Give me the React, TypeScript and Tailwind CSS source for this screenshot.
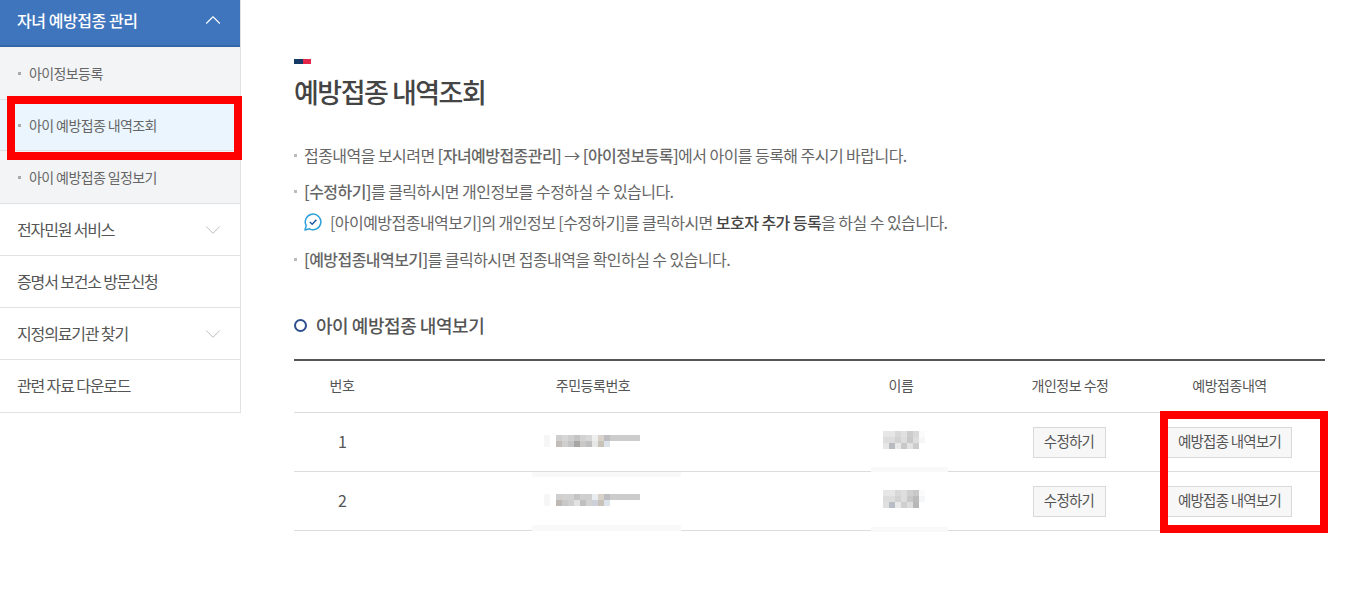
import { ChevronDown, ChevronUp } from "lucide-react"

const FONT = "font-['Noto_Sans_CJK_KR','Noto_Sans',sans-serif]"

function SubItem({ label, active }: { label: string; active?: boolean }) {
  return (
    <li className={`flex h-[52px] items-center gap-[8px] pl-[18px] text-[14px] tracking-[-0.6px] text-[#666] ${active ? "border-y border-[#e0e0e0] bg-[#eaf5fe]" : ""}`}>
      <span className="h-[3px] w-[3px] bg-[#aaa]" />
      {label}
    </li>
  )
}

function MenuItem({ label, arrow, tall }: { label: string; arrow?: boolean; tall?: boolean }) {
  return (
    <li className={`flex items-center justify-between border-b border-[#e2e2e2] pl-[17px] pr-[14px] text-[16px] tracking-[-1.15px] text-[#555] ${tall ? "h-[53px]" : "h-[52px]"}`}>
      <span className="pb-[2px]">{label}</span>
      {arrow && <ChevronDown className="h-[26px] w-[26px] text-[#bbb]" strokeWidth={0.9} />}
    </li>
  )
}

function Bullet({ children }: { children: React.ReactNode }) {
  return (
    <li className="flex items-center gap-[7px] text-[16px] tracking-[-0.55px] text-[#666]">
      <span className="h-[3px] w-[3px] bg-[#bbb]" />
      <span>{children}</span>
    </li>
  )
}

function Mosaic({ rows, size = 6 }: { rows: string[][]; size?: number }) {
  return (
    <div className="flex flex-col">
      {rows.map((row, i) => (
        <div key={i} className="flex">
          {row.map((c, j) => (
            <span key={j} style={{ backgroundColor: c, width: size, height: size }} />
          ))}
        </div>
      ))}
    </div>
  )
}

const idRows1 = [
  ["#f6f6f6", "#ffffff", "#cfcfcf", "#d6d6d6", "#cfcfcf", "#c4c4c4", "#d2d2d2", "#d8d8d8", "#eeeeee", "#d8d2ca", "#bdbdc2", "#cccccc", "#cccccc", "#cccccc", "#cccccc", "#cccccc"],
  ["#f6f6f6", "#ffffff", "#c2bdb8", "#cfcfcf", "#c4c4c4", "#a8a5a5", "#c8c8c8", "#bfbfbf", "#e6e6e6", "#c8c2b8", "#dde3ea"],
]
const idRows2 = [
  ["#f6f6f6", "#ffffff", "#cfcfcf", "#d2d2d2", "#d2d2d2", "#c4c4c4", "#cfcfcf", "#cfcfcf", "#e8ebf0", "#d8d2ca", "#bdbdc2", "#cccccc", "#cccccc", "#cccccc", "#cccccc", "#cccccc"],
  ["#f6f6f6", "#ffffff", "#bdb8b4", "#c8c8c8", "#cfcfcf", "#e2e2e2", "#bfbfbf", "#d2d2d2", "#ccd0d8", "#c8c2b8", "#dde3ea"],
]
const nameRows1 = [
  ["#e6e6e6", "#e6e6e6", "#d8d8d8", "#e0e0e0", "#cccccc", "#d8d8d8", "#fbfbfb"],
  ["#dddddd", "#dddddd", "#d2d2d2", "#dddddd", "#c8c8c8", "#dddddd", "#f4f6f8"],
  ["#e6e6e6", "#b8bcc0", "#e8e8e8", "#c8c8c8", "#e2e2e2", "#cccccc", "#ffffff"],
]
const nameRows2 = [
  ["#e6e6e6", "#e6e6e6", "#d8d8d8", "#dedede", "#cfcfcf", "#c8c8c8", "#fbfbfb"],
  ["#dddddd", "#dddddd", "#d2d2d2", "#dddddd", "#c8c8c8", "#bbbbbb", "#f4f6f8"],
  ["#e0e0e0", "#b8bcc4", "#e8e8e8", "#cfcfcf", "#dddddd", "#b8b8b8", "#ffffff"],
]

function PageButton({ label, wide }: { label: string; wide?: boolean }) {
  return (
    <button className={`flex h-[31px] items-center justify-center border border-[#d8d8d8] bg-[#f7f7f8] pb-[2px] text-[14.5px] tracking-[-0.75px] text-[#555] ${wide ? "w-[125px]" : "w-[73px]"}`}>
      {label}
    </button>
  )
}

function Row({ no, id, name, first }: { no: number; id: string[][]; name: string[][]; first?: boolean }) {
  return (
    <div className="grid h-[59px] grid-cols-[96px_406px_210px_128px_191px] items-center border-b border-[#dcdcdc] text-[#555]">
      <div className="pb-[2px] pl-[1px] text-center text-[16px]">{no}</div>
      <div className="relative h-full">
        <div className="absolute left-[154px] top-[22px]"><Mosaic rows={id} /></div>
        <div className={`absolute left-[142px] w-[149px] bg-[#f9f9f9] ${first ? "bottom-[-6px] h-[5px]" : "bottom-[-1px] h-[6px]"}`} />
      </div>
      <div className="relative h-full">
        <div className="absolute left-[87px] top-[18px]"><Mosaic rows={name} /></div>
        <div className={`absolute left-[75px] h-[5px] w-[77px] bg-[#f9f9f9] ${first ? "bottom-[-1px]" : "bottom-[-2px]"}`} />
      </div>
      <div className="flex justify-center pr-[2px]"><PageButton label="수정하기" /></div>
      <div className="flex justify-center"><PageButton label="예방접종 내역보기" wide /></div>
    </div>
  )
}

export default function App() {
  return (
    <div className={`relative flex h-[613px] w-[1372px] overflow-hidden bg-white ${FONT}`}>
      {/* Sidebar */}
      <aside className="w-[241px] shrink-0">
        <div className="border-r border-[#e2e2e2]">
          <div className="flex h-[47px] items-center justify-between border-b-2 border-[#3566a8] bg-[#3f75bd] pb-[5px] pl-[17px] pr-[14px] text-[16px] font-medium tracking-[-0.45px] text-white">
            자녀 예방접종 관리
            <ChevronUp className="h-[26px] w-[26px] text-white" strokeWidth={1} />
          </div>
          <ul className="border-b border-[#e2e2e2] bg-[#f3f4f6]">
            <SubItem label="아이정보등록" />
            <SubItem label="아이 예방접종 내역조회" active />
            <SubItem label="아이 예방접종 일정보기" />
          </ul>
          <ul>
            <MenuItem label="전자민원 서비스" arrow />
            <MenuItem label="증명서 보건소 방문신청" />
            <MenuItem label="지정의료기관 찾기" arrow />
            <MenuItem label="관련 자료 다운로드" tall />
          </ul>
        </div>
      </aside>

      {/* Content */}
      <main className="ml-[53px] w-[1031px] pt-[59px]">
        <div className="flex h-[5px] w-[17px]">
          <span className="w-[9px] bg-[#143a66]" />
          <span className="w-[8px] bg-[#e5284a]" />
        </div>
        <h1 className="mt-[10px] text-[27px] font-medium leading-[36px] tracking-[-1.5px] text-[#444]">예방접종 내역조회</h1>

        <ul className="mt-[34px] flex flex-col">
          <div className="h-[22px] leading-[22px]">
            <Bullet>접종내역을 보시려면 <b className="font-medium">[자녀예방접종관리]</b> → <b className="font-medium">[아이정보등록]</b>에서 아이를 등록해 주시기 바랍니다.</Bullet>
          </div>
          <div className="mt-[14px] h-[22px] leading-[22px]">
            <Bullet><b className="font-medium">[수정하기]</b>를 클릭하시면 개인정보를 수정하실 수 있습니다.</Bullet>
          </div>
          <div className="mt-[9px] flex h-[22px] items-center pl-[10px] text-[16px] tracking-[-0.55px] text-[#666]">
            <svg viewBox="0 0 18 18" className="mr-[8px] h-[18px] w-[18px] fill-none stroke-[#2b9fd9]" strokeWidth="1.5">
              <path d="M1 17 L2.2 12.6 A7.8 7.8 0 1 1 5.4 15.8 Z" strokeLinejoin="round" />
              <path d="M5.8 9 L8.2 11.2 L12.4 6.8" stroke="#1f5aa0" />
            </svg>
            <span>[아이예방접종내역보기]의 개인정보 [수정하기]를 클릭하시면 <b className="font-medium text-[#444]">보호자 추가 등록</b>을 하실 수 있습니다.</span>
          </div>
          <div className="mt-[15px] h-[22px] leading-[22px]">
            <Bullet><b className="font-medium">[예방접종내역보기]</b>를 클릭하시면 접종내역을 확인하실 수 있습니다.</Bullet>
          </div>
        </ul>

        <div className="mt-[43px] flex items-center gap-[9px]">
          <span className="h-[13px] w-[13px] rounded-full border-2 border-[#2d4f8f]" />
          <h2 className="text-[18px] font-medium leading-[24px] tracking-[-0.45px] text-[#555]">아이 예방접종 내역보기</h2>
        </div>

        <div className="mt-[22px] border-t-[2px] border-[#555]">
          <div className="grid h-[52px] grid-cols-[96px_406px_210px_128px_191px] items-center border-b border-[#dcdcdc] pb-[2px] text-center text-[14px] tracking-[-0.5px] text-[#555]">
            <div>번호</div>
            <div>주민등록번호</div>
            <div>이름</div>
            <div>개인정보 수정</div>
            <div>예방접종내역</div>
          </div>
          <Row no={1} id={idRows1} name={nameRows1} first />
          <Row no={2} id={idRows2} name={nameRows2} />
        </div>
      </main>

      {/* Annotation boxes */}
      <div className="absolute left-[7px] top-[96px] h-[64px] w-[235px] border-[8px] border-[#ff0000]" />
      <div className="absolute left-[1160px] top-[411px] h-[122px] w-[168px] border-[8px] border-[#ff0000]" />
    </div>
  )
}
